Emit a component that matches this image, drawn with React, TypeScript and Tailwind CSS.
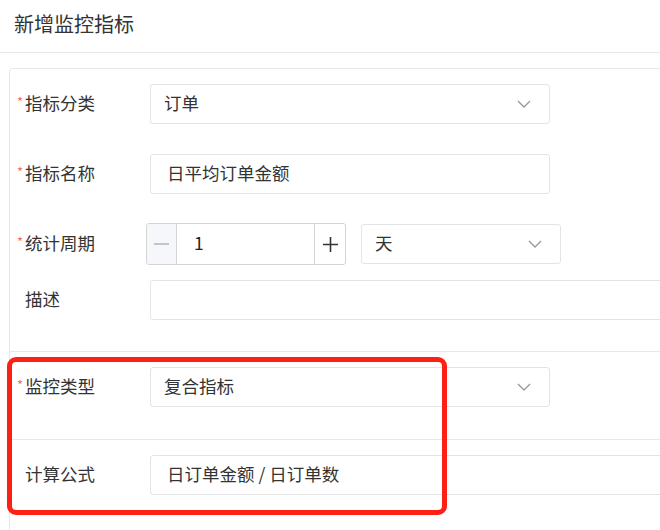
import React from "react";

const font = { fontFamily: '"Noto Sans CJK SC", "Liberation Sans", sans-serif' };

const Chevron: React.FC = () => (
  <svg width="14" height="8" viewBox="0 0 14 8" className="shrink-0">
    <polyline points="1,1 7,7 13,1" fill="none" stroke="#9a9a9a" strokeWidth="1.4" />
  </svg>
);

const Label: React.FC<{ text: string; required?: boolean }> = ({ text, required }) => (
  <div className="w-[140px] shrink-0 flex items-center pl-[7px] text-[17.5px] text-[#333] -mt-[2px]">
    <span className="w-[8px] text-[#f56c6c] text-[13px] leading-none -mt-[4px]">
      {required ? "*" : ""}
    </span>
    <span>{text}</span>
  </div>
);

const Select: React.FC<{ value: string; width: string }> = ({ value, width }) => (
  <div
    className={`${width} h-[40px] border border-[#e4e4e4] rounded-[3px] flex items-center justify-between pl-[13px] pr-[18px] text-[17.5px] text-[#333]`}
  >
    <span className="-mt-[2px]">{value}</span>
    <Chevron />
  </div>
);

const Input: React.FC<{ value?: string; width: string }> = ({ value, width }) => (
  <div
    className={`${width} h-[40px] border border-[#e4e4e4] rounded-[3px] flex items-center pl-[16px] text-[17.5px] text-[#333]`}
  >
    <span className="-mt-[2px]">{value}</span>
  </div>
);

export default function App() {
  return (
    <div className="w-[660px] h-[530px] overflow-hidden bg-white relative" style={font}>
      <div className="h-[53px] border-b border-[#e8e8e8] pl-[14px] flex items-center text-[20px] text-[#333]">
        <span className="-mt-[4px]">新增监控指标</span>
      </div>
      <div className="pt-[15px] pl-[9px]">
        <div className="w-[720px] h-[480px] border border-[#e8e8e8] rounded-[3px]">
          <div className="pt-[15px] pb-[31px] border-b border-[#e8e8e8]">
            <div className="flex items-center">
              <Label text="指标分类" required />
              <Select value="订单" width="w-[400px]" />
            </div>
            <div className="flex items-center mt-[30px]">
              <Label text="指标名称" required />
              <Input value="日平均订单金额" width="w-[400px]" />
            </div>
            <div className="flex items-center mt-[30px]">
              <Label text="统计周期" required />
              <div className="-ml-[4px] w-[200px] h-[42px] -my-[1px] border border-[#d4d4d4] rounded-[3px] flex overflow-hidden">
                <div className="w-[30px] bg-[#f5f7fa] border-r border-[#d4d4d4] flex items-center justify-center">
                  <div className="w-[15px] h-[2px] bg-[#c0c4cc]" />
                </div>
                <div className="flex-1 flex items-center pl-[17px] text-[17.5px] text-[#222]">
                  <span className="-mt-[2px]">1</span>
                </div>
                <div className="w-[31px] border-l border-[#d4d4d4] flex items-center justify-center">
                  <svg width="17" height="17" viewBox="0 0 17 17">
                    <path d="M8.5 1v15M1 8.5h15" stroke="#333" strokeWidth="1.6" />
                  </svg>
                </div>
              </div>
              <div className="ml-[15px]">
                <Select value="天" width="w-[200px]" />
              </div>
            </div>
            <div className="flex items-center mt-[16px]">
              <Label text="描述" />
              <Input width="w-[560px]" />
            </div>
          </div>
          <div className="pt-[15px] pb-[32px] border-b border-[#e8e8e8]">
            <div className="flex items-center">
              <Label text="监控类型" required />
              <Select value="复合指标" width="w-[400px]" />
            </div>
          </div>
          <div className="pt-[15px]">
            <div className="flex items-center">
              <Label text="计算公式" />
              <Input value="日订单金额 / 日订单数" width="w-[560px]" />
            </div>
          </div>
        </div>
      </div>
      <div className="absolute left-[7px] top-[357px] w-[440px] h-[158px] border-[5px] border-[#fe2015] rounded-[9px]" />
    </div>
  );
}
